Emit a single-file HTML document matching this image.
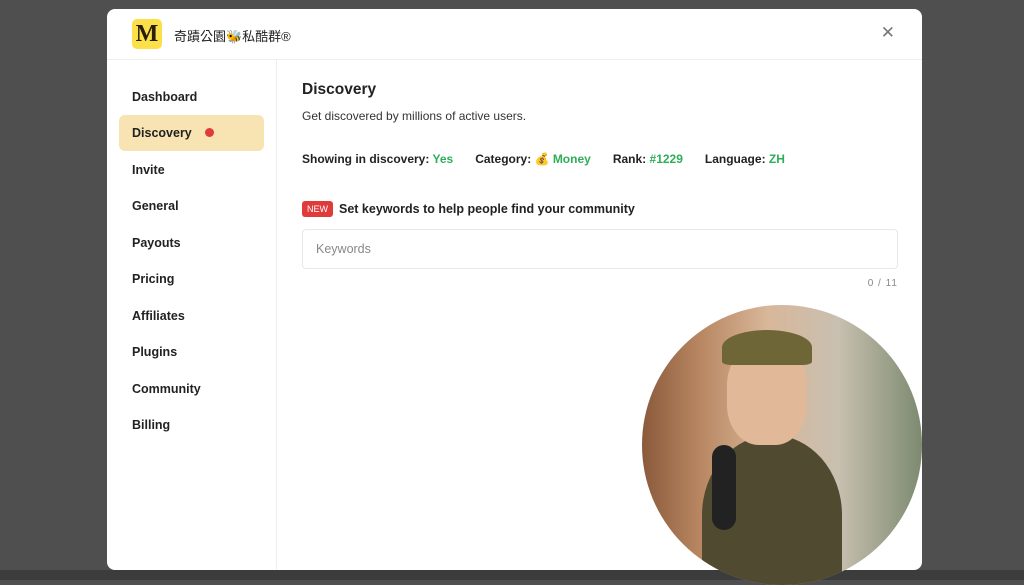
<!DOCTYPE html>
<html><head><meta charset="utf-8"><style>
*{margin:0;padding:0;box-sizing:border-box}
body{width:1024px;height:580px;overflow:hidden;background:#4f4f4f;font-family:"Liberation Sans","Noto Sans CJK TC",sans-serif;position:relative}
.modal{position:absolute;left:107px;top:9px;width:815px;height:561px;background:#fff;border-radius:8px;overflow:hidden}
.head{height:51px;border-bottom:1px solid #eee;position:relative}
.logo{position:absolute;left:25px;top:10px;width:30px;height:30px;background:#fbe04a;border-radius:5px;color:#2a1e08;font-weight:bold;font-size:24px;text-align:center;line-height:30px;font-family:"Liberation Serif",serif}
.title{position:absolute;left:67px;top:17px;font-size:13px;color:#222}
.close{position:absolute;right:27px;top:14px;font-size:17px;color:#777}
.side{position:absolute;left:0;top:51px;width:170px;bottom:0;border-right:1px solid #eee}
.item{position:absolute;left:12px;width:145px;height:36px;line-height:36px;padding-left:13px;font-size:12.5px;font-weight:bold;color:#222;border-radius:6px}
.item.act{background:#f7e4b2}
.dot{display:inline-block;width:9px;height:9px;border-radius:50%;background:#e03a3a;margin-left:13px}
.main{position:absolute;left:195px;top:51px;right:24px}
h1{position:absolute;top:21px;font-size:15.5px;color:#222}
.sub{position:absolute;top:49px;font-size:12px;color:#333}
.stats{position:absolute;top:92px;font-size:12px;font-weight:bold;color:#222;white-space:nowrap}
.stats span.g{color:#2fae5a}
.kw{position:absolute;top:141px;font-size:12.5px;font-weight:bold;color:#222}
.new{display:inline-block;background:#e03a3a;color:#fff;font-size:9px;font-weight:normal;padding:3px 5px;border-radius:3px;margin-right:6px;vertical-align:1px}
.inp{position:absolute;top:169px;left:0;width:596px;height:40px;border:1px solid #e8e8e8;border-radius:4px;padding-left:13px;line-height:38px;font-size:12.5px;color:#888}
.cnt{position:absolute;top:218px;right:0;font-size:10px;color:#888;letter-spacing:1px}
.vid{position:absolute;left:642px;top:305px;width:280px;height:280px;border-radius:50%;overflow:hidden;background:linear-gradient(90deg,#8a5a3c 0%,#b78560 20%,#d8b79a 45%,#c8c0b0 70%,#7c8a70 100%)}
.bottom{position:absolute;left:0;top:570px;width:1024px;height:10px;background:#3c3c3c}
</style></head><body>
<div class="bottom"></div>
<div class="modal">
<div class="head"><div class="logo">M</div><div class="title">奇蹟公園🐝私酷群®</div><div class="close">✕</div></div>
<div class="side">
<div class="item" style="top:19px">Dashboard</div>
<div class="item act" style="top:55px">Discovery<span class="dot"></span></div>
<div class="item" style="top:92px">Invite</div>
<div class="item" style="top:128px">General</div>
<div class="item" style="top:165px">Payouts</div>
<div class="item" style="top:201px">Pricing</div>
<div class="item" style="top:238px">Affiliates</div>
<div class="item" style="top:274px">Plugins</div>
<div class="item" style="top:311px">Community</div>
<div class="item" style="top:347px">Billing</div>
</div>
<div class="main">
<h1>Discovery</h1>
<div class="sub">Get discovered by millions of active users.</div>
<div class="stats">Showing in discovery: <span class="g">Yes</span><span style="display:inline-block;width:22px"></span>Category: 💰 <span class="g">Money</span><span style="display:inline-block;width:22px"></span>Rank: <span class="g">#1229</span><span style="display:inline-block;width:22px"></span>Language: <span class="g">ZH</span></div>
<div class="kw"><span class="new">NEW</span>Set keywords to help people find your community</div>
<div class="inp">Keywords</div>
<div class="cnt">0 / 11</div>
</div>
</div>
<div class="vid">
<div style="position:absolute;left:60px;top:130px;width:140px;height:160px;background:#4f4a30;border-radius:50% 50% 0 0"></div>
<div style="position:absolute;left:85px;top:40px;width:80px;height:100px;background:#e1b898;border-radius:40%"></div>
<div style="position:absolute;left:80px;top:25px;width:90px;height:35px;background:#6e6636;border-radius:50% 50% 10% 10%"></div>
<div style="position:absolute;left:70px;top:140px;width:24px;height:85px;background:#222;border-radius:12px"></div>
</div>
</body></html>
